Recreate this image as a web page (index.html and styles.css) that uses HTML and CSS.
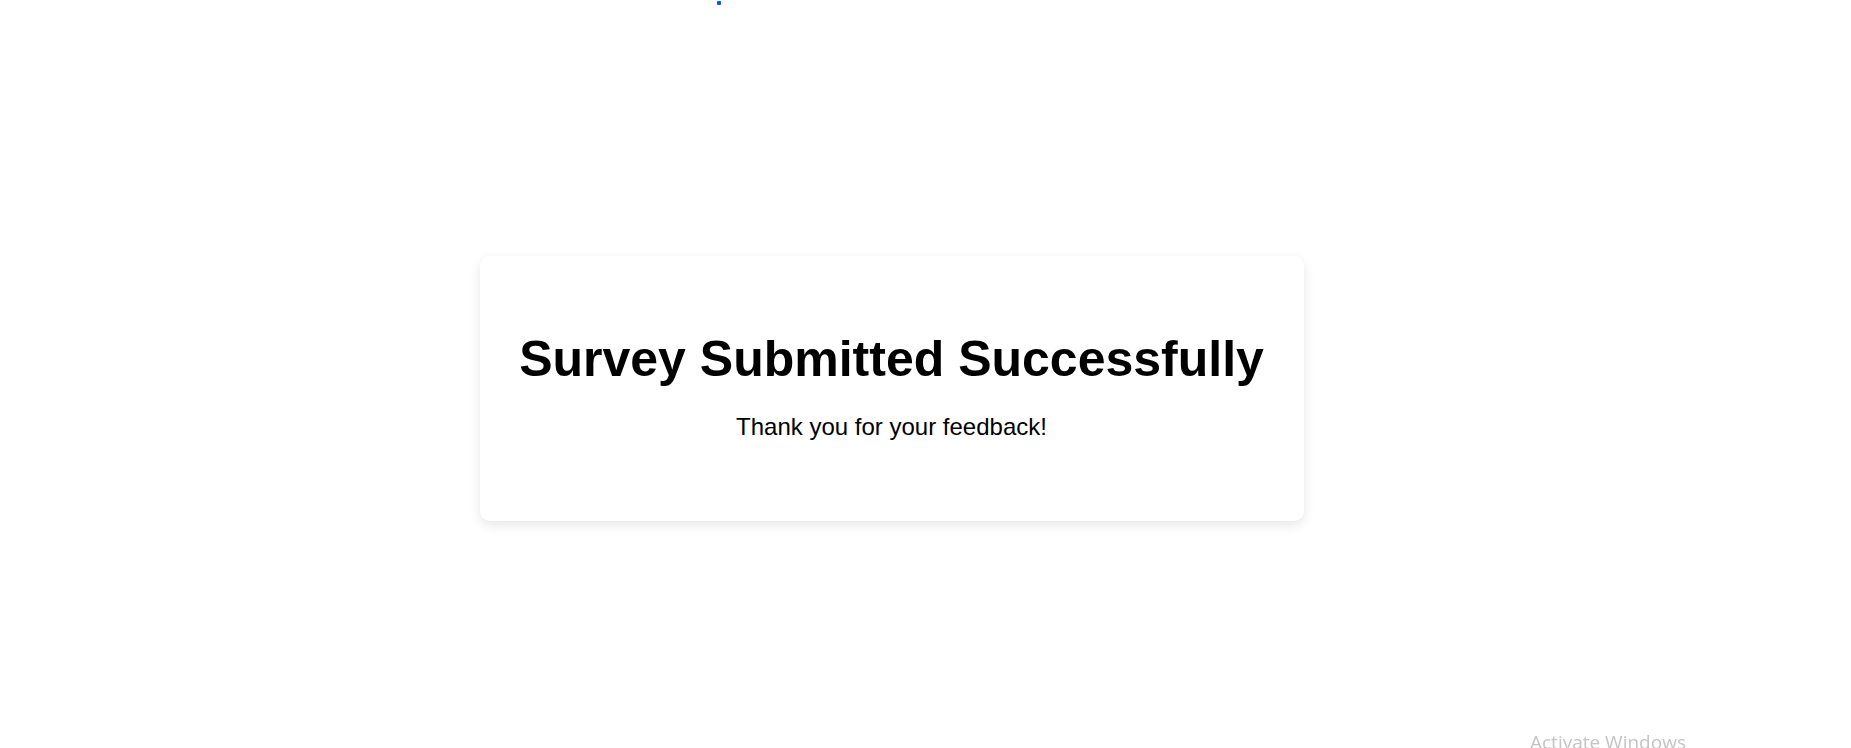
FILE: index.html
```html
<!DOCTYPE html>
<html lang="en">
<head>
<meta charset="utf-8">
<title>Survey Submitted</title>
<link rel="stylesheet" href="styles.css">
</head>
<body>
<span class="dot"></span>
<main class="page">
  <section class="card">
    <h1 class="title">Survey Submitted Successfully</h1>
    <p class="message">Thank you for your feedback!</p>
  </section>
</main>
<div class="watermark">Activate Windows</div>
</body>
</html>
```
FILE: styles.css
```css
html, body {
  margin: 0;
  padding: 0;
  background: #ffffff;
  height: 100%;
  overflow: hidden;
}

body {
  font-family: "Liberation Sans", Arial, sans-serif;
  color: #000;
}

.dot {
  position: absolute;
  left: 717px;
  top: 1px;
  width: 4px;
  height: 4px;
  border-radius: 1px;
  background: #0f52ff;
}

.page {
  box-sizing: border-box;
  height: 748px;
  padding: 29px 68px 0 0;
  display: flex;
  align-items: center;
  justify-content: center;
}

.card {
  box-sizing: border-box;
  width: 824px;
  height: 265px;
  padding: 75px 20px 0;
  background: #ffffff;
  border-radius: 10px;
  box-shadow: 0 4px 12px rgba(0, 0, 0, 0.1);
  text-align: center;
}

.title {
  margin: 0;
  font-size: 50px;
  line-height: 57px;
  font-weight: 700;
}

.message {
  margin: 25px 0 0;
  font-size: 24px;
  line-height: 28px;
}

.watermark {
  position: fixed;
  left: 1530px;
  top: 729px;
  font-family: "Open Sans", "Noto Sans", sans-serif;
  font-size: 19px;
  font-weight: 400;
  color: #c4c4c4;
  white-space: nowrap;
}
```
